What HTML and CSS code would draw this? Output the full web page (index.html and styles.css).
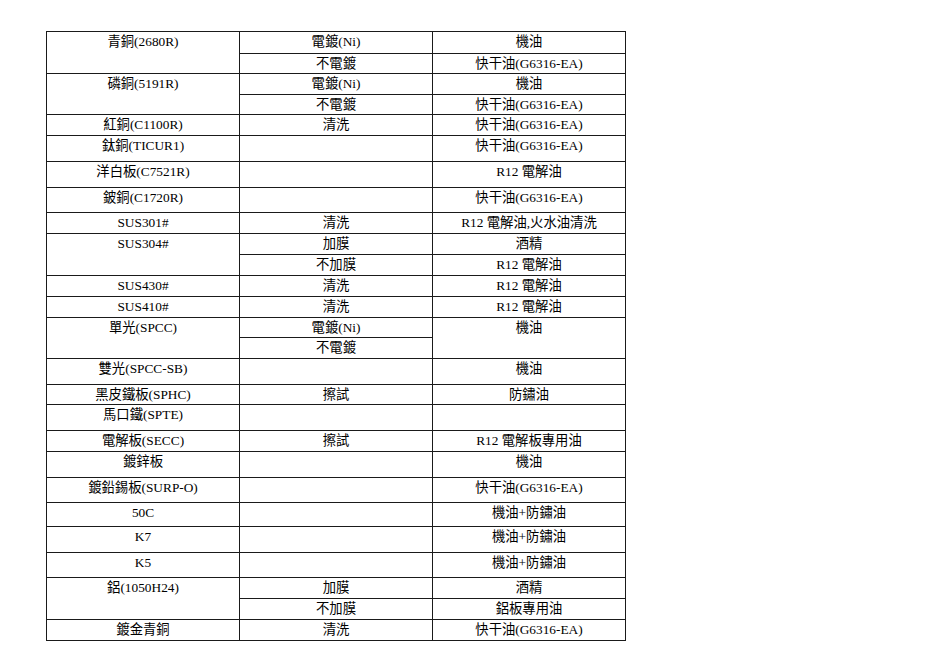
FILE: index.html
```html
<!DOCTYPE html>
<html lang="zh-Hant">
<head>
<meta charset="utf-8">
<link rel="stylesheet" href="styles.css">
</head>
<body>
<table class="sheet">
<colgroup><col class="c"><col class="c"><col class="c"></colgroup>
<tr class="r22"><td rowspan="2">青銅(2680R)</td><td>電鍍(Ni)</td><td>機油</td></tr>
<tr class="r20"><td>不電鍍</td><td>快干油(G6316-EA)</td></tr>
<tr class="r21"><td rowspan="2">磷銅(5191R)</td><td>電鍍(Ni)</td><td>機油</td></tr>
<tr class="r20"><td>不電鍍</td><td>快干油(G6316-EA)</td></tr>
<tr class="r21"><td>紅銅(C1100R)</td><td>清洗</td><td>快干油(G6316-EA)</td></tr>
<tr class="r26"><td>鈦銅(TICUR1)</td><td></td><td>快干油(G6316-EA)</td></tr>
<tr class="r26"><td>洋白板(C7521R)</td><td></td><td>R12 電解油</td></tr>
<tr class="r25"><td>鈹銅(C1720R)</td><td></td><td>快干油(G6316-EA)</td></tr>
<tr class="r21"><td>SUS301#</td><td>清洗</td><td>R12 電解油,火水油清洗</td></tr>
<tr class="r21"><td rowspan="2">SUS304#</td><td>加膜</td><td>酒精</td></tr>
<tr class="r21"><td>不加膜</td><td>R12 電解油</td></tr>
<tr class="r21"><td>SUS430#</td><td>清洗</td><td>R12 電解油</td></tr>
<tr class="r21"><td>SUS410#</td><td>清洗</td><td>R12 電解油</td></tr>
<tr class="r20"><td rowspan="2">單光(SPCC)</td><td>電鍍(Ni)</td><td rowspan="2">機油</td></tr>
<tr class="r21"><td>不電鍍</td></tr>
<tr class="r26"><td>雙光(SPCC-SB)</td><td></td><td>機油</td></tr>
<tr class="r20"><td>黑皮鐵板(SPHC)</td><td>擦試</td><td>防鏽油</td></tr>
<tr class="r26"><td>馬口鐵(SPTE)</td><td></td><td></td></tr>
<tr class="r21"><td>電解板(SECC)</td><td>擦試</td><td>R12 電解板專用油</td></tr>
<tr class="r26"><td>鍍鋅板</td><td></td><td>機油</td></tr>
<tr class="r25"><td>鍍鉛錫板(SURP-O)</td><td></td><td>快干油(G6316-EA)</td></tr>
<tr class="r24"><td>50C</td><td></td><td>機油+防鏽油</td></tr>
<tr class="r26"><td>K7</td><td></td><td>機油+防鏽油</td></tr>
<tr class="r25"><td>K5</td><td></td><td>機油+防鏽油</td></tr>
<tr class="r21"><td rowspan="2">鋁(1050H24)</td><td>加膜</td><td>酒精</td></tr>
<tr class="r21"><td>不加膜</td><td>鋁板專用油</td></tr>
<tr class="r21"><td>鍍金青銅</td><td>清洗</td><td>快干油(G6316-EA)</td></tr>
</table>
</body>
</html>
```
FILE: styles.css
```css
html, body {
  margin: 0;
  padding: 0;
  background: #fff;
}
body {
  padding: 31px 0 0 46px;
  font-family: "Liberation Serif", "Noto Sans CJK TC", serif;
  font-size: 13.33px;
  color: #000;
}
.sheet {
  border-collapse: collapse;
  table-layout: fixed;
  width: 580px;
}
.c {
  width: 193px;
}
.sheet td {
  border: 1px solid #1a1a1a;
  padding: 2px 2px 0 2px;
  line-height: 16px;
  text-align: center;
  vertical-align: top;
  white-space: nowrap;
}
.r20 { height: 20px; }
.r21 { height: 21px; }
.r22 { height: 22px; }
.r24 { height: 24px; }
.r25 { height: 25px; }
.r26 { height: 26px; }
```
